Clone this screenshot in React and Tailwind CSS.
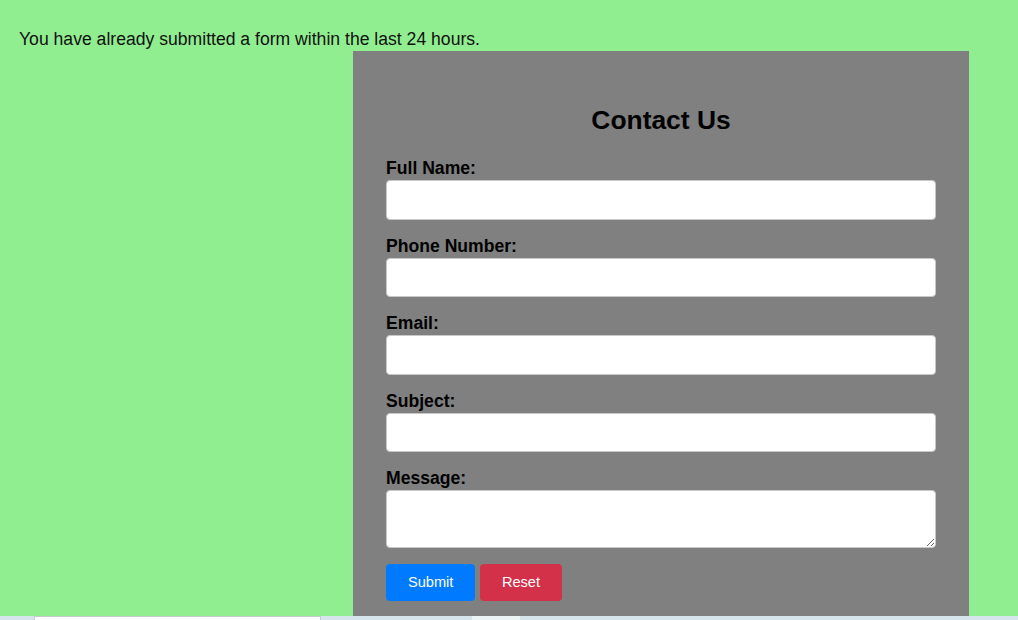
import React from "react";

const font = { fontFamily: '"Liberation Sans", Arial, Helvetica, sans-serif' };

function Field({ label, area }) {
  return (
    <div className="mb-[16px]">
      <label className="block font-bold text-[17.6px] leading-[20px] mb-[2px] text-black">
        {label}
      </label>
      {area ? (
        <textarea
          className="block w-full h-[58px] bg-white border border-[#c8c8c8] rounded-[4px] resize-y outline-none"
        />
      ) : (
        <input
          type="text"
          className="block w-full h-[39.5px] bg-white border border-[#c8c8c8] rounded-[4px] outline-none"
        />
      )}
    </div>
  );
}

export default function App() {
  return (
    <div className="w-[1018px] h-[620px] flex flex-col overflow-hidden bg-[#90ee90]" style={font}>
      <div className="flex-1 overflow-hidden flex flex-col">
        <p className="ml-[19px] mt-[29px] text-[17.6px] leading-[20px] text-[#111]">
          You have already submitted a form within the last 24 hours.
        </p>
        <div className="ml-[353px] mt-[2px] w-[616px] flex-1 bg-[#808080] px-[33px] pt-[54px]">
          <h2 className="text-center font-bold text-[26.4px] leading-[30px] text-black mb-[23px]">
            Contact Us
          </h2>
          <Field label="Full Name:" />
          <Field label="Phone Number:" />
          <Field label="Email:" />
          <Field label="Subject:" />
          <Field label="Message:" area />
          <div className="flex gap-[5px]">
            <button className="h-[37px] px-[22px] rounded-[4px] bg-[#007bff] text-white text-[14.6px]">
              Submit
            </button>
            <button className="h-[37px] px-[21.5px] rounded-[4px] bg-[#d3304a] text-white text-[14.6px]">
              Reset
            </button>
          </div>
        </div>
      </div>
      <div className="h-[4px] flex bg-[#d6e4ec]">
        <div className="ml-[34px] w-[287px] bg-white border-t border-l border-r border-[#c4ccd2]" />
        <div className="ml-[151px] w-[48px] bg-[#edf4f6]" />
      </div>
    </div>
  );
}
